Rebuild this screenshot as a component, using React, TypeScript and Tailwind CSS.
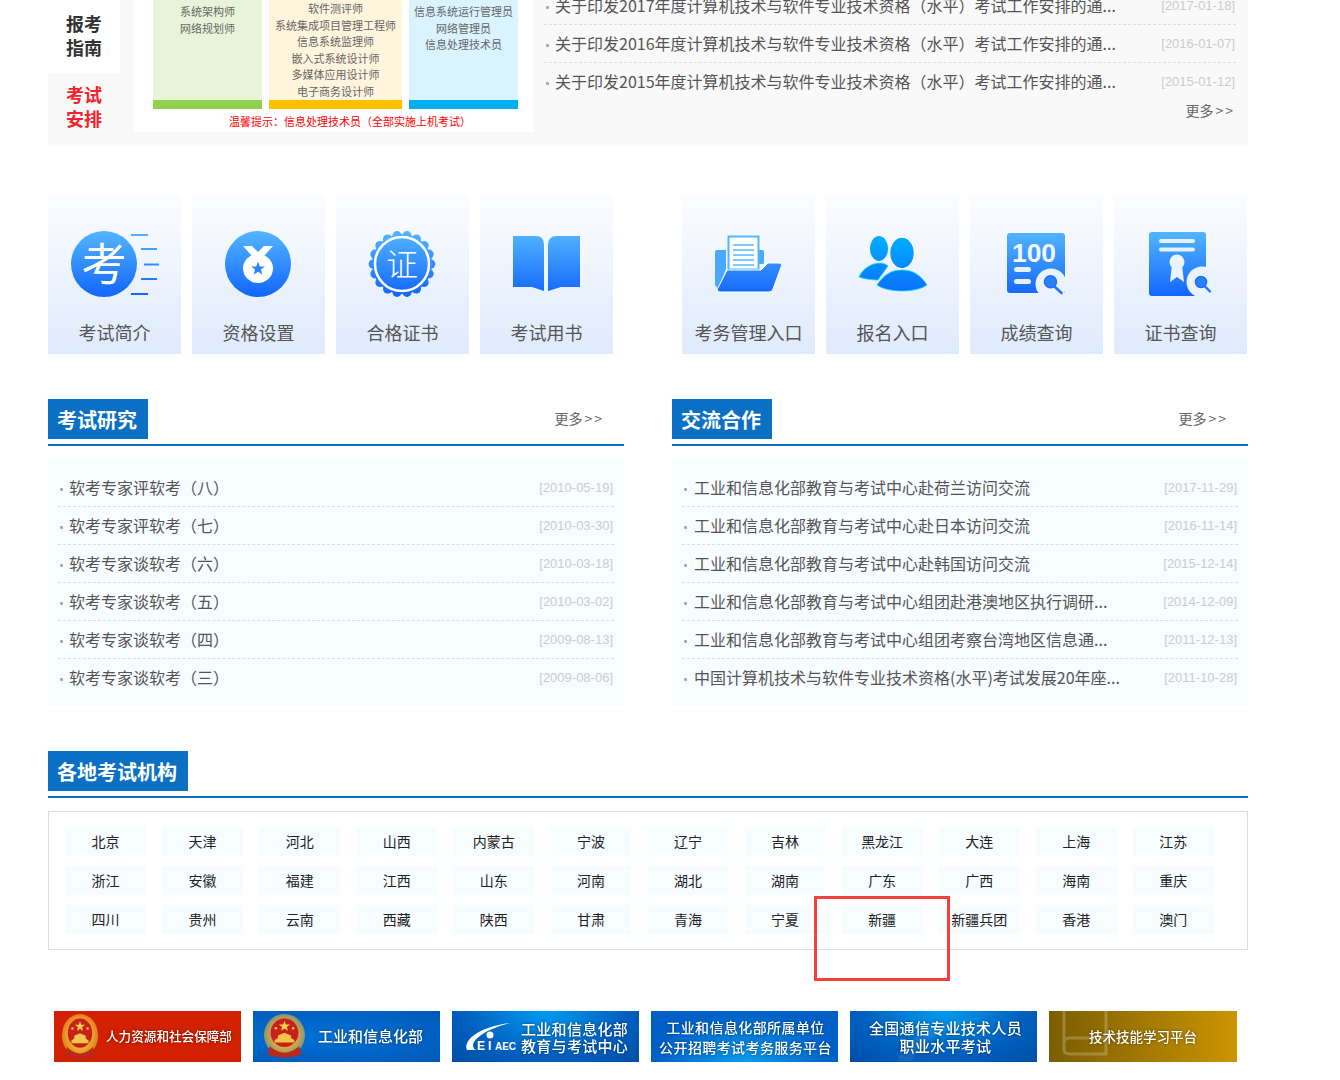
import type { ReactNode } from "react";

const CJK = "font-['Noto_Sans_CJK_SC','Noto_Sans',sans-serif]";

const notices = [
  ["关于印发2017年度计算机技术与软件专业技术资格（水平）考试工作安排的通...", "[2017-01-18]"],
  ["关于印发2016年度计算机技术与软件专业技术资格（水平）考试工作安排的通...", "[2016-01-07]"],
  ["关于印发2015年度计算机技术与软件专业技术资格（水平）考试工作安排的通...", "[2015-01-12]"],
];

const research = [
  ["软考专家评软考（八）", "[2010-05-19]"],
  ["软考专家评软考（七）", "[2010-03-30]"],
  ["软考专家谈软考（六）", "[2010-03-18]"],
  ["软考专家谈软考（五）", "[2010-03-02]"],
  ["软考专家谈软考（四）", "[2009-08-13]"],
  ["软考专家谈软考（三）", "[2009-08-06]"],
];

const exchange = [
  ["工业和信息化部教育与考试中心赴荷兰访问交流", "[2017-11-29]"],
  ["工业和信息化部教育与考试中心赴日本访问交流", "[2016-11-14]"],
  ["工业和信息化部教育与考试中心赴韩国访问交流", "[2015-12-14]"],
  ["工业和信息化部教育与考试中心组团赴港澳地区执行调研...", "[2014-12-09]"],
  ["工业和信息化部教育与考试中心组团考察台湾地区信息通...", "[2011-12-13]"],
  ["中国计算机技术与软件专业技术资格(水平)考试发展20年座...", "[2011-10-28]"],
];

const regions = [
  "北京", "天津", "河北", "山西", "内蒙古", "宁波", "辽宁", "吉林", "黑龙江", "大连", "上海", "江苏",
  "浙江", "安徽", "福建", "江西", "山东", "河南", "湖北", "湖南", "广东", "广西", "海南", "重庆",
  "四川", "贵州", "云南", "西藏", "陕西", "甘肃", "青海", "宁夏", "新疆", "新疆兵团", "香港", "澳门",
];

function Grad({ id, cyan }: { id: string; cyan?: boolean }) {
  return (
    <defs>
      <linearGradient id={id} x1="0" y1="4" x2="0" y2="68" gradientUnits="userSpaceOnUse">
        <stop offset="0" stopColor={cyan ? "#00b4ff" : "#54b6ff"} />
        <stop offset="1" stopColor={cyan ? "#0a6cfb" : "#1367fb"} />
      </linearGradient>
    </defs>
  );
}

function Frame({ children }: { children: ReactNode }) {
  return (
    <svg width="133" height="72" viewBox="0 0 133 72" className="block">
      {children}
    </svg>
  );
}

function KaoIcon() {
  const f = "url(#g-kao)";
  return (
    <Frame>
      <Grad id="g-kao" />
      <circle cx="56" cy="37" r="33" fill={f} />
      <text x="56" y="54" textAnchor="middle" fontSize="45" fill="#fff" fontFamily="Noto Sans CJK SC" fontWeight="400">考</text>
      <rect x="83" y="7" width="17" height="2" fill={f} />
      <rect x="93" y="21" width="16" height="2" fill={f} />
      <rect x="96" y="36.5" width="15" height="2" fill={f} />
      <rect x="93" y="51" width="16" height="2" fill={f} />
      <rect x="83" y="66" width="17" height="2" fill={f} />
    </Frame>
  );
}

function MedalIcon() {
  const f = "url(#g-medal)";
  return (
    <Frame>
      <Grad id="g-medal" />
      <circle cx="66" cy="37" r="33" fill={f} />
      <polygon points="51,19 60,19 66,25 72,19 81,19 72,29 60,29" fill="#fff" />
      <ellipse cx="66" cy="41.5" rx="15" ry="14.5" fill="#fff" />
      <polygon points="66,34.5 67.8,39.4 73,39.5 68.9,42.6 70.3,47.6 66,44.7 61.7,47.6 63.1,42.6 59,39.5 64.2,39.4" fill="#2a86fc" />
    </Frame>
  );
}

function CertIcon() {
  const f = "url(#g-cert)";
  const bumps = Array.from({ length: 18 }, (_, i) => (i * Math.PI) / 9);
  return (
    <Frame>
      <Grad id="g-cert" />
      <circle cx="66" cy="37" r="30" fill={f} />
      {bumps.map((a) => (
        <circle key={a} cx={66 + 28.8 * Math.cos(a)} cy={37 + 28.8 * Math.sin(a)} r="4.6" fill={f} />
      ))}
      <circle cx="66" cy="37" r="27" fill="none" stroke="#fff" strokeWidth="2.5" />
      <text x="66" y="49" textAnchor="middle" fontSize="32" fill="#fff" fontFamily="Noto Sans CJK SC" fontWeight="300">证</text>
    </Frame>
  );
}

function BookIcon() {
  const f = "url(#g-book)";
  return (
    <Frame>
      <Grad id="g-book" />
      <path d="M33 9H56Q64 9 64 18V64L52 60H33Z" fill={f} />
      <path d="M100 9H77Q68 9 68 18V64L81 60H100Z" fill={f} />
    </Frame>
  );
}

function FolderIcon() {
  const f = "url(#g-folder)";
  return (
    <Frame>
      <Grad id="g-folder" />
      <path d="M33 25a2 2 0 0 1 2-2H44V42L36 62L33 58Z" fill="#4aa9ff" />
      <rect x="70" y="23" width="12" height="14" rx="1.5" fill="#4aa9ff" />
      <rect x="46.5" y="9.5" width="30" height="33" fill="#fff" stroke="#58b6ff" strokeWidth="2" />
      <path d="M51 18H72M51 23H72M51 28H72M51 33H72M51 38H72" stroke="#58b6ff" strokeWidth="1.6" />
      <path d="M45 43H79L86 36H98a2 2 0 0 1 1.6 2.6L91 62a4 4 0 0 1-4 3H38a2.5 2.5 0 0 1-2.4-3.4Z" fill={f} stroke="#fff" strokeWidth="1" />
    </Frame>
  );
}

function UsersIcon() {
  const f = "url(#g-users)";
  return (
    <Frame>
      <Grad id="g-users" cyan />
      <ellipse cx="53" cy="21.5" rx="9" ry="12.5" fill={f} />
      <path d="M33 50C37 41 46 36 54 36C57 36 60 37 62 39L52 53C46 53 38 52 33 50Z" fill={f} stroke="#19d8ff" strokeWidth="0.8" />
      <ellipse cx="76" cy="26" rx="12.5" ry="16" fill={f} stroke="#fff" strokeWidth="1.5" />
      <path d="M51 58C58 47 66 43 76 43C86 43 94 47 101 58C90 66 62 66 51 58Z" fill={f} stroke="#19d8ff" strokeWidth="0.8" />
    </Frame>
  );
}

function ScoreIcon() {
  const f = "url(#g-score)";
  return (
    <Frame>
      <Grad id="g-score" />
      <rect x="37" y="6" width="58" height="60" rx="3" fill={f} />
      <text x="42" y="35" fontSize="25" fontWeight="700" fill="#f2f8ff" fontFamily="Liberation Sans" textLength="44" lengthAdjust="spacingAndGlyphs">100</text>
      <rect x="44" y="40" width="17" height="5" rx="2.5" fill="#e6f2ff" />
      <rect x="44" y="52" width="17" height="5" rx="2.5" fill="#e6f2ff" />
      <circle cx="81" cy="57" r="15.5" fill="#eaf2fe" />
      <circle cx="80.5" cy="54.7" r="6" fill="#2a82fb" stroke="#1b6efb" strokeWidth="1.5" />
      <path d="M85 60L91.5 66" stroke="#1f74fb" strokeWidth="2.6" strokeLinecap="round" />
    </Frame>
  );
}

function CertSearchIcon() {
  const f = "url(#g-search)";
  return (
    <Frame>
      <Grad id="g-search" />
      <rect x="35" y="5" width="57" height="64" rx="3" fill={f} />
      <rect x="45" y="12" width="36" height="4" rx="2" fill="#e6f2ff" />
      <rect x="45" y="20.5" width="36" height="4" rx="2" fill="#e6f2ff" />
      <polygon points="58,38 68,38 70,55 63,50 56,55" fill="#eaf4ff" />
      <circle cx="63" cy="35" r="7.5" fill="#eaf4ff" />
      <circle cx="88" cy="55" r="15.5" fill="#eaf2fe" />
      <circle cx="87" cy="55" r="5.5" fill="#2a82fb" stroke="#1b6efb" strokeWidth="1.5" />
      <path d="M91 59.5L96 64.5" stroke="#1f74fb" strokeWidth="2.4" strokeLinecap="round" />
    </Frame>
  );
}

function Emblem({ id, w, h, rim }: { id: string; w: number; h: number; rim: string }) {
  return (
    <svg width={w} height={h} viewBox="0 0 50 60" preserveAspectRatio="none" className="block shrink-0">
      <defs>
        <radialGradient id={id}>
          <stop offset="0.6" stopColor={rim} />
          <stop offset="1" stopColor={rim} stopOpacity="0.65" />
        </radialGradient>
      </defs>
      <ellipse cx="25" cy="28" rx="25" ry="28" fill={`url(#${id})`} />
      <ellipse cx="25" cy="25" rx="17" ry="19" fill="#c8201c" />
      <polygon points="25,9 26.7,14 32,14.1 27.8,17.3 29.3,22.3 25,19.3 20.7,22.3 22.2,17.3 18,14.1 23.3,14" fill="#f6cf45" />
      <circle cx="14.5" cy="19" r="1.6" fill="#f6cf45" />
      <circle cx="35.5" cy="19" r="1.6" fill="#f6cf45" />
      <path d="M13 38H37V34.5L33 32V28.5L25 25L17 28.5V32L13 34.5Z" fill="#f0c648" />
      <path d="M7 43Q25 60 43 43L46 54Q25 62 4 54Z" fill="#b92a1a" />
    </svg>
  );
}

function Row({ title, date, last, bulletGap }: { title: string; date: string; last: boolean; bulletGap: string }) {
  return (
    <li className={`flex h-[38px] items-center justify-between pl-[2px] pr-[1px] ${last ? "" : "border-b border-dashed border-[#dddddd]"}`}>
      <div className={`flex min-w-0 items-center ${bulletGap}`}>
        <span className="mt-[3px] size-[3px] shrink-0 rounded-[1px] bg-[#aaaaaa]" />
        <span className="whitespace-nowrap pb-[2px] text-[16px] leading-[24px] text-[#555555]">{title}</span>
      </div>
      <span className="shrink-0 font-['Liberation_Sans',sans-serif] text-[13px] text-[#cccccc]">{date}</span>
    </li>
  );
}

function More() {
  return (
    <span className="text-[14px] leading-[20px] text-[#666666]">
      更多<span className="ml-[2px] tracking-[2px]">&gt;&gt;</span>
    </span>
  );
}

function Heading({ title, more }: { title: string; more?: boolean }) {
  return (
    <div className="flex h-[47px] items-start justify-between border-b-2 border-[#0b70c4]">
      <h2 className="flex h-[40px] items-center bg-[#0b70c4] pl-[9px] pr-[11px] pt-[2px] text-[20px] font-bold text-white">{title}</h2>
      {more && (
        <div className="mr-[20px] flex h-[40px] items-center pb-[2px]">
          <More />
        </div>
      )}
    </div>
  );
}

function NewsColumn({ title, rows, gap }: { title: string; rows: string[][]; gap: string }) {
  return (
    <section className="w-[576px]">
      <Heading title={title} more />
      <ul className="mt-[13px] h-[247px] bg-[#f7fcff] px-[10px] pt-[10px]">
        {rows.map((r, i) => (
          <Row key={r[0]} title={r[0]} date={r[1]} last={i === rows.length - 1} bulletGap={gap} />
        ))}
      </ul>
    </section>
  );
}

function Card({ label, icon }: { label: string; icon: ReactNode }) {
  return (
    <div className="flex h-[159px] w-[133px] flex-col items-center bg-gradient-to-b from-[#fbfdff] to-[#dfeafc] pt-[32px]">
      {icon}
      <div className="mt-[21px] whitespace-nowrap text-[18px] leading-[24px] text-[#555555]">{label}</div>
    </div>
  );
}

function Banner({ className, children }: { className: string; children: ReactNode }) {
  return <div className={`relative flex h-[51px] items-center overflow-hidden text-white ${className}`}>{children}</div>;
}

const bannerText = "blur-[0.4px] font-medium [text-shadow:0_0_3px_rgba(0,0,0,0.55)]";

export default function App() {
  return (
    <div className={`min-h-[1080px] w-[1340px] bg-white pl-[48px] ${CJK}`}>
      <div className="w-[1200px]">
        {/* 考试安排 */}
        <div className="flex h-[145px] bg-[#f9f9f9]">
          <div className="w-[73px] pr-[1px] text-center text-[18px] font-bold leading-[24px]">
            <div className="flex h-[73px] items-center justify-center bg-white pb-[4px] text-[#333333]">报考<br />指南</div>
            <div className="flex h-[71px] items-center justify-center pb-[6px] text-[#f5222d]">考试<br />安排</div>
          </div>
          <div className="ml-[13px] h-[132px] w-[400px] bg-white pl-[19px] pr-[16px]">
            <div className="flex gap-[7px] text-center text-[11px] leading-[16.6px] text-[#666666]">
              <div className="w-[109px]">
                <div className="h-[100px] bg-[#e8f4d9] pt-[3px]">系统架构师<br />网络规划师</div>
                <div className="h-[9px] bg-[#92d14f]" />
              </div>
              <div className="w-[133px]">
                <div className="h-[100px] bg-[#fff5dd]">
                  软件测评师<br />系统集成项目管理工程师<br />信息系统监理师<br />嵌入式系统设计师<br />多媒体应用设计师<br />电子商务设计师
                </div>
                <div className="h-[9px] bg-[#ffc000]" />
              </div>
              <div className="w-[109px]">
                <div className="h-[100px] bg-[#d9f3ff] pt-[3px]">信息系统运行管理员<br />网络管理员<br />信息处理技术员</div>
                <div className="h-[9px] bg-[#00b0f0]" />
              </div>
            </div>
            <p className="mt-[3px] pl-[29px] text-center text-[11px] leading-[18px] text-[#ff0000]">温馨提示：信息处理技术员（全部实施上机考试）</p>
          </div>
          <div className="ml-[10px] w-[692px] overflow-hidden">
            <ul className="-mt-[13px]">
              {notices.map((r, i) => (
                <Row key={r[0]} title={r[0]} date={r[1]} last={i === notices.length - 1} bulletGap="gap-[6px]" />
              ))}
            </ul>
            <div className="-mt-[4px] pr-[1px] text-right"><More /></div>
          </div>
        </div>

        {/* 入口 */}
        <div className="mt-[50px] flex">
          <div className="flex gap-[11px]">
            <Card label="考试简介" icon={<KaoIcon />} />
            <Card label="资格设置" icon={<MedalIcon />} />
            <Card label="合格证书" icon={<CertIcon />} />
            <Card label="考试用书" icon={<BookIcon />} />
          </div>
          <div className="ml-[69px] flex gap-[11px]">
            <Card label="考务管理入口" icon={<FolderIcon />} />
            <Card label="报名入口" icon={<UsersIcon />} />
            <Card label="成绩查询" icon={<ScoreIcon />} />
            <Card label="证书查询" icon={<CertSearchIcon />} />
          </div>
        </div>

        {/* 研究 / 合作 */}
        <div className="mt-[45px] flex gap-[48px]">
          <NewsColumn title="考试研究" rows={research} gap="gap-[6px]" />
          <NewsColumn title="交流合作" rows={exchange} gap="gap-[7px]" />
        </div>

        {/* 各地考试机构 */}
        <section className="mt-[45px]">
          <Heading title="各地考试机构" />
          <div className="relative mt-[13px] h-[139px] border border-[#dddddd] pl-[16px] pt-[15px]">
            <div className="grid grid-cols-[repeat(12,81px)] gap-x-[16.09px] gap-y-[10px]">
              {regions.map((r) => (
                <div key={r} className="flex h-[29px] items-center justify-center whitespace-nowrap bg-[#f7fcff] text-[14px] text-[#222222]">
                  {r}
                </div>
              ))}
            </div>
            <div className="absolute left-[765px] top-[84px] h-[85px] w-[136px] border-[3px] border-[#f43f3f]" />
          </div>
        </section>

        {/* 友情链接 */}
        <div className="mt-[61px] flex gap-[12px] pl-[6px]">
          <Banner className="w-[187px] bg-[#d22100] pl-[8px]">
            <Emblem id="em-a" w={36} h={46} rim="#f0b030" />
            <span className={`ml-[8px] whitespace-nowrap text-[12.6px] ${bannerText}`}>人力资源和社会保障部</span>
          </Banner>
          <Banner className="w-[187px] bg-[radial-gradient(ellipse_at_40%_50%,#0072d6,#0058b8)] pl-[11px]">
            <Emblem id="em-b" w={41} h={45} rim="#d8ab45" />
            <span className={`ml-[13px] whitespace-nowrap text-[15px] ${bannerText}`}>工业和信息化部</span>
          </Banner>
          <Banner className="w-[187px] bg-[radial-gradient(ellipse_at_50%_0%,#009cf0,#0060c0_60%,#004fa6)] pl-[11px]">
            <svg width="54" height="36" viewBox="0 0 54 36" className="shrink-0">
              <path d="M4 31C0 22 14 8 47 4C28 9 12 17 10 26C10 29 12 31 14 31Z" fill="#fff" />
              <circle cx="27" cy="16" r="3.5" fill="#fff" />
              <text x="14" y="31" fontSize="12" fill="#fff" fontFamily="Liberation Sans" fontWeight="700">E</text>
              <text x="25" y="31" fontSize="12" fill="#fff" fontFamily="Liberation Sans" fontWeight="700">I</text>
              <text x="32" y="31" fontSize="11" fill="#fff" fontFamily="Liberation Sans" fontWeight="700" textLength="21" lengthAdjust="spacingAndGlyphs">AEC</text>
            </svg>
            <span className={`ml-[4px] whitespace-nowrap text-[15px] leading-[17px] tracking-[0.3px] ${bannerText}`}>工业和信息化部<br />教育与考试中心</span>
          </Banner>
          <Banner className="w-[187px] justify-center bg-[radial-gradient(ellipse_at_50%_100%,#0a9aee,#0060c8_70%)] text-center">
            <span className={`ml-[2px] whitespace-nowrap text-[14px] leading-[20px] tracking-[0.4px] ${bannerText}`}>工业和信息化部所属单位<br />公开招聘考试考务服务平台</span>
          </Banner>
          <Banner className="w-[187px] justify-center bg-[radial-gradient(ellipse_at_50%_0%,#009cf0,#0060c0_60%,#004fa6)] text-center">
            <svg width="100" height="51" viewBox="0 0 100 51" className="absolute left-[44px] top-0">
              <path d="M4 50C6 30 40 8 92 6C58 14 28 26 18 50Z" fill="#ffffff" fillOpacity="0.07" />
            </svg>
            <span className={`relative ml-[4px] whitespace-nowrap text-[15px] leading-[18px] tracking-[0.3px] ${bannerText}`}>全国通信专业技术人员<br />职业水平考试</span>
          </Banner>
          <Banner className="w-[188px] justify-center bg-gradient-to-r from-[#7a5e00] to-[#cc9400]">
            <svg width="46" height="51" viewBox="0 0 46 51" className="absolute left-[13px] top-0">
              <path d="M2 0V38Q2 43 7 43H44V0M2 32Q2 27 7 27H44" fill="none" stroke="#ffffff" strokeOpacity="0.22" strokeWidth="3" />
            </svg>
            <span className={`relative whitespace-nowrap text-[13.5px] ${bannerText}`}>技术技能学习平台</span>
          </Banner>
        </div>
      </div>
    </div>
  );
}
